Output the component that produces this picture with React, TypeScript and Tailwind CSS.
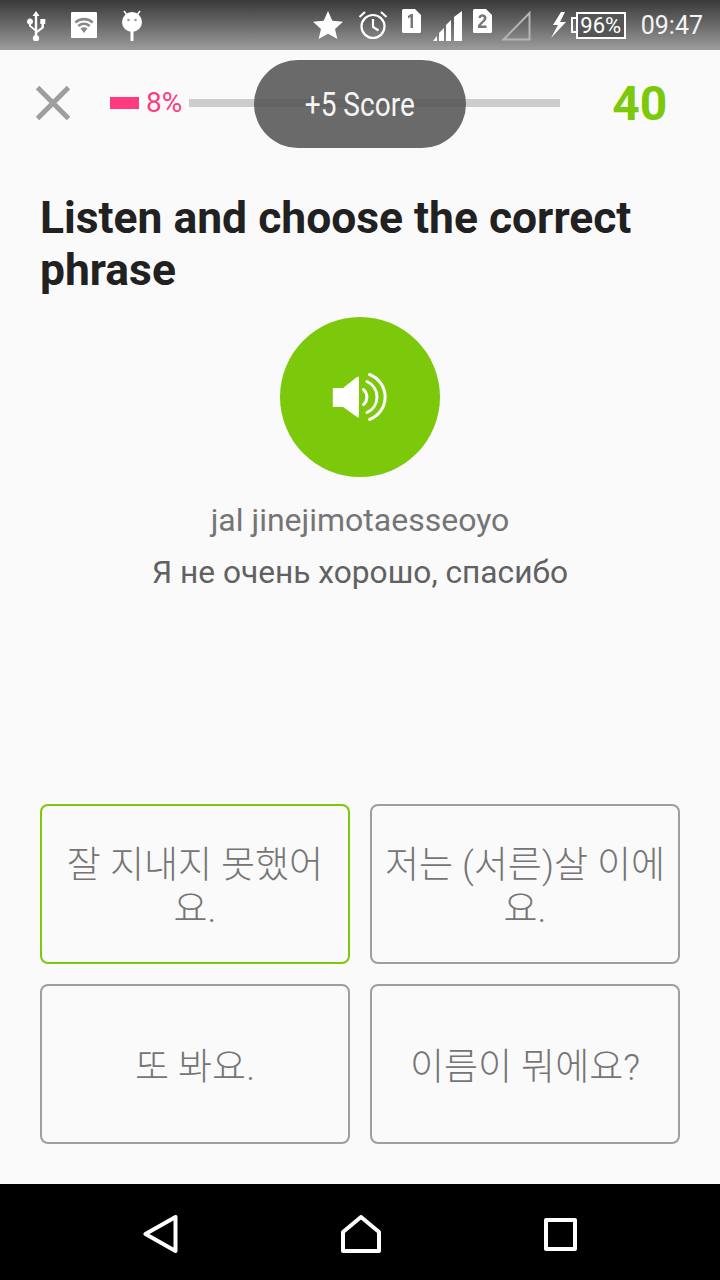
const roboto = "font-['Roboto',sans-serif]";

function StatusBar() {
  return (
    <div className="h-[50px] shrink-0 flex items-center bg-gradient-to-b from-[#3a3a3a] to-[#9d9d9d] text-white">
      <div className="w-[26px] ml-[26px] mt-[2px]">
        <svg width="20" height="30" viewBox="0 0 20 30" fill="white">
          <path d="M10 0l3.500 5h-2.300v14.500l4.300-3.600V13h-1.200V8h5v5h-1.400v4L11.200 22v2.300a3.200 3.200 0 1 1-2.400 0V20L3 15.300V13.400a3 3 0 1 1 2 0v1l3.800 3.300V5H6.500z" />
        </svg>
      </div>
      <svg className="ml-[19px]" width="26" height="26" viewBox="0 0 26 26">
        <rect width="26" height="26" rx="1" fill="white" />
        <path d="M3.500 9.500a14 14 0 0 1 19 0l-1.500 2a12 12 0 0 0-16 0zM6.500 13a10 10 0 0 1 13 0l-1.500 2a8 8 0 0 0-10 0zM9.500 16.500a6 6 0 0 1 7 0L13 21z" fill="#8a8a8a" />
      </svg>
      <svg className="ml-[24px]" width="22" height="32" viewBox="0 0 22 32" fill="white">
        <circle cx="11" cy="13" r="10" />
        <path d="M3 2l3 4M19 2l-3 4" stroke="white" strokeWidth="1.500" />
        <rect x="9.500" y="22" width="3" height="10" />
        <circle cx="7.500" cy="11" r="1.300" fill="#999" />
        <circle cx="14.500" cy="11" r="1.300" fill="#999" />
      </svg>
      <div className="flex-1" />
      <svg width="30" height="28" viewBox="0 0 30 28" fill="white">
        <path d="M15 0l4.300 9.800 10.700 1-8 7.100 2.400 10.100L15 22.700 5.600 28 8 17.900 0 10.800l10.700-1z" />
      </svg>
      <svg className="ml-[15px]" width="30" height="30" viewBox="0 0 30 30" fill="none" stroke="white" strokeWidth="2.200">
        <circle cx="15" cy="16.500" r="11.500" />
        <path d="M15 9v8l5.500 3.500M1.500 7L7 2M28.500 7L23 2" />
      </svg>
      <svg className="ml-[14px] -mt-[8px]" width="19" height="24" viewBox="0 0 19 24">
        <path d="M1.500 0H13l6 6v16.500a1.500 1.500 0 0 1-1.500 1.500h-16A1.500 1.500 0 0 1 0 22.500v-21A1.500 1.500 0 0 1 1.500 0z" fill="white" />
        <path d="M6 7l3-2h2v14H8.500V8l-2.500 1.500z" fill="#777" />
      </svg>
      <svg className="ml-[12px] mt-[2px]" width="30" height="30" viewBox="0 0 30 30" fill="white">
        <path d="M0 30l4-5v5zM6 30v-8l5-5v13zM13 30V14l5-5v21zM21 30V6l8-6v30z" />
      </svg>
      <svg className="ml-[10px] -mt-[8px]" width="19" height="24" viewBox="0 0 19 24">
        <path d="M1.500 0H13l6 6v16.500a1.500 1.500 0 0 1-1.500 1.500h-16A1.500 1.500 0 0 1 0 22.500v-21A1.500 1.500 0 0 1 1.500 0z" fill="white" />
        <path d="M5.500 9c0-5 8-5 8 0 0 3-4 5-5.500 7.500h5.500V19H5v-2.500c1.500-3 5.800-5 5.800-7.500 0-1.800-2.800-1.800-2.800 0z" fill="#777" />
      </svg>
      <svg className="ml-[9px] mt-[2px]" width="30" height="30" viewBox="0 0 30 30" fill="none" stroke="#b5b5b5" strokeWidth="2">
        <path d="M28.500 2v26.500H2.500z" />
      </svg>
      <svg className="ml-[19px]" width="16" height="26" viewBox="0 0 16 26" fill="white">
        <path d="M11 0L3 13h5L1 26l15-16h-6l5-10z" />
      </svg>
      <div className="ml-[5px] flex items-center">
        <div className="w-[5px] h-[16px] border-l-2 border-t-2 border-b-2 border-white" />
        <div className={`w-[50px] h-[27px] border-2 border-white bg-[#555] text-[22px] leading-[23px] text-center ${roboto}`}>96%</div>
      </div>
      <div className={`ml-[15px] mr-[17px] text-[25px] leading-none text-[#f4f4f4] ${roboto}`}>09:47</div>
    </div>
  );
}

function ScoreHeader() {
  return (
    <div className="relative h-[108px] shrink-0 flex items-center pl-[36px]">
      <svg width="34" height="34" viewBox="0 0 34 34" stroke="#9e9e9e" strokeWidth="5" className="-mt-[2px]">
        <path d="M1.500 1.500l31 31M32.500 1.500l-31 31" />
      </svg>
      <div className="ml-[40px] w-[29px] h-[12px] bg-[#ff3a80] -mt-[2px]" />
      <div className={`ml-[7px] text-[28px] leading-none text-[#ff3a80] -mt-[2px] ${roboto}`}>8%</div>
      <div className="ml-[7px] w-[371px] h-[8px] bg-[#cdcdcd] -mt-[2px]" />
      <div className={`ml-[52px] text-[48px] leading-none font-bold text-[#7cc90b] ${roboto}`}>40</div>
      <div className="absolute left-[254px] top-[10px] w-[212px] h-[88px] rounded-[44px] bg-[#505050]/85 flex items-center justify-center">
        <span className={`text-[33px] leading-none text-[#f5f5f5] scale-x-[0.85] whitespace-nowrap ${roboto}`}>+5 Score</span>
      </div>
    </div>
  );
}

function SpeakerButton() {
  return (
    <div className="w-[160px] h-[160px] rounded-full bg-[#7cc90b] flex items-center justify-center">
      <svg width="56" height="50" viewBox="0 0 56 50" fill="none" stroke="white" strokeLinecap="round" strokeWidth="3">
        <path d="M0.800 16h10.200L25 5q2-1.500 2 1v38q0 2.500-2 1L11 35H0.800z" fill="white" stroke="none" />
        <path d="M31.500 17.500a10 10 0 0 1 0 15" />
        <path d="M35 9.500a17 17 0 0 1 0 31" />
        <path d="M37.500 2.500a24 24 0 0 1 0 45" />
      </svg>
    </div>
  );
}

const answers = [
  { text: "잘 지내지 못했어요.", active: true },
  { text: "저는 (서른)살 이에요.", active: false },
  { text: "또 봐요.", active: false },
  { text: "이름이 뭐에요?", active: false },
];

function Answers() {
  return (
    <div className="grid grid-cols-2 gap-[20px] px-[40px] pb-[40px]">
      {answers.map((a) => (
        <div
          key={a.text}
          className={`h-[160px] rounded-[8px] border-2 flex items-center justify-center text-center px-[6px] pt-[8px] text-[37px] leading-[44px] font-light text-[#757575] font-['Roboto','Noto_Sans_CJK_KR',sans-serif] ${
            a.active ? "border-[#7cc90b]" : "border-[#9e9e9e]"
          }`}
        >
          {a.text}
        </div>
      ))}
    </div>
  );
}

function NavBar() {
  return (
    <div className="h-[96px] shrink-0 bg-black flex items-center pl-[143px] pt-[4px]">
      <svg width="35" height="38" viewBox="0 0 35 38" fill="none" stroke="white" strokeWidth="4" strokeLinejoin="round">
        <path d="M2.500 19L32.500 2v34z" />
      </svg>
      <svg className="ml-[163px]" width="40" height="38" viewBox="0 0 40 38" fill="none" stroke="white" strokeWidth="4" strokeLinejoin="round">
        <path d="M2 36V17L20 2l18 15v19z" />
      </svg>
      <svg className="ml-[163px]" width="33" height="33" viewBox="0 0 33 33" fill="none" stroke="white" strokeWidth="4" strokeLinejoin="round">
        <rect x="2" y="2" width="29" height="29" />
      </svg>
    </div>
  );
}

export default function App() {
  return (
    <div className="w-[720px] h-[1280px] flex flex-col bg-[#fafafa] overflow-hidden">
      <StatusBar />
      <ScoreHeader />
      <div className="flex-1 flex flex-col">
        <h1 className={`px-[40px] pt-[34px] text-[44.400px] leading-[52px] font-bold text-[#212121] ${roboto}`}>
          Listen and choose the correct phrase
        </h1>
        <div className="mt-[21px] flex flex-col items-center">
          <SpeakerButton />
          <p className={`mt-[23px] text-[32px] leading-[40px] text-[#757575] ${roboto}`}>jal jinejimotaesseoyo</p>
          <p className={`mt-[13px] text-[31.700px] leading-[40px] text-[#616161] ${roboto}`}>Я не очень хорошо, спасибо</p>
        </div>
        <div className="flex-1" />
        <Answers />
      </div>
      <NavBar />
    </div>
  );
}
